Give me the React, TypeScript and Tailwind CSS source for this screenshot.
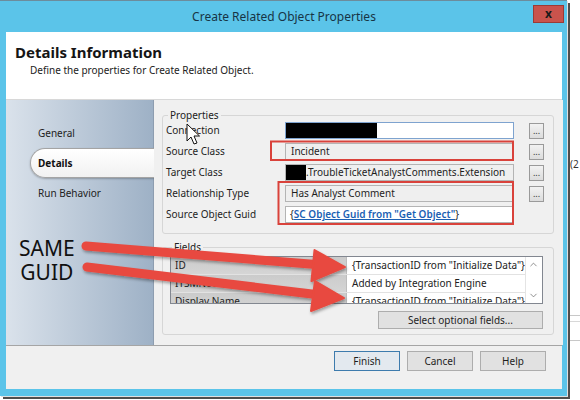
import React from "react";
import { ChevronUp, ChevronDown } from "lucide-react";

function Ellipsis() {
  return (
    <div className="ml-[15px] w-[15px] h-[16px] shrink-0 border border-[#9a9a9a] bg-gradient-to-b from-[#f2f2f2] to-[#dcdcdc] flex items-end justify-center text-[9px] leading-[10px] pb-[2px] text-[#333]">
      ...
    </div>
  );
}

function Row({ label, children, button = true }: { label: string; children: React.ReactNode; button?: boolean }) {
  return (
    <div className="flex items-center h-[17px]">
      <div className="w-[119px] shrink-0 text-[10px] text-[#1e1e1e] whitespace-nowrap">{label}</div>
      {children}
      {button ? <Ellipsis /> : <div className="ml-[15px] w-[15px] shrink-0" />}
    </div>
  );
}

function Box({ white = false, blue = false, children }: { white?: boolean; blue?: boolean; children?: React.ReactNode }) {
  return (
    <div
      className={
        "w-[229px] h-[17px] shrink-0 border flex items-center overflow-hidden whitespace-nowrap text-[10px] text-[#1e1e1e] " +
        (white ? "bg-white " : "bg-[#efefef] ") +
        (blue ? "border-[#7ea3cf]" : "border-[#b4b4b4]")
      }
    >
      {children}
    </div>
  );
}

function GridRow({ name, value }: { name: string; value: string }) {
  return (
    <div className="flex h-[18px] shrink-0 border-b border-[#e2e2e2]">
      <div className="w-[176px] shrink-0 bg-gradient-to-b from-[#cbcbcb] to-[#d5d5d5] border-r border-[#bdbdbd] pl-[4px] text-[10px] leading-[17px] text-[#222] whitespace-nowrap overflow-hidden">
        {name}
      </div>
      <div className="flex-1 bg-white pl-[5px] text-[10px] leading-[17px] text-[#222] whitespace-nowrap overflow-hidden">
        {value}
      </div>
    </div>
  );
}

function FooterButton({ label, primary = false }: { label: string; primary?: boolean }) {
  return (
    <div
      className={
        "w-[66px] h-[20px] border flex items-center justify-center text-[10px] text-[#1e1e1e] " +
        (primary ? "border-[#3d7bad] bg-[#e3e9ef]" : "border-[#adadad] bg-[#e1e1e1]")
      }
    >
      {label}
    </div>
  );
}

export default function App() {
  return (
    <div className="relative w-[580px] h-[400px] overflow-hidden bg-white flex font-['Noto_Sans','Open_Sans',sans-serif]">
      {/* dialog window */}
      <div className="w-[567px] h-[396px] shrink-0 bg-[#5bc4e9] border-t border-[#6c8c9c] flex flex-col pl-[6px] pr-[5px] pb-[7px] shadow-[1px_1px_0_#e0e0e0,3px_3px_0_#4e4e4e]">
        {/* title bar */}
        <div className="relative h-[31px] shrink-0 flex items-center justify-center text-[12px] text-[#173445]">
          Create Related Object Properties
          <div className="absolute right-[-2px] top-[4px] w-[31px] h-[18px] bg-[#c9534c] border border-[#9b3b36] flex items-center justify-center text-[12px] font-bold leading-none text-[#1a1a1a]">
            x
          </div>
        </div>

        <div className="flex-1 flex flex-col bg-white">
          {/* header */}
          <div className="h-[68px] shrink-0 pl-[9px] pt-[10px] border-b border-[#d8d8d8]">
            <div className="text-[15px] leading-[20px] font-bold text-[#151515]">Details Information</div>
            <div className="pl-[15px] mt-[1px] text-[10px] leading-[14px] text-[#222]">
              Define the properties for Create Related Object.
            </div>
          </div>

          {/* body */}
          <div className="flex flex-1">
            {/* navigation */}
            <div className="w-[148px] shrink-0 bg-gradient-to-r from-[#dae2eb] to-[#9eb1c6] border-r border-[#8d9db0] pt-[18px] flex flex-col">
              <div className="h-[30px] flex items-center pl-[32px] text-[10px] text-[#222]">General</div>
              <div className="h-[30px] ml-[24px] mr-[-1px] rounded-l-[15px] border border-r-0 border-[#a4a4a4] bg-gradient-to-b from-white to-[#f1f1f1] shadow-[0_1px_2px_rgba(0,0,0,0.25)] flex items-center pl-[7px] text-[10px] font-bold text-[#111]">
                Details
              </div>
              <div className="h-[30px] flex items-center pl-[32px] text-[10px] text-[#222]">Run Behavior</div>
            </div>

            {/* content */}
            <div className="flex-1 bg-[#f0f0f0] pl-[8px] pr-[9px] pt-[8px]">
              <fieldset className="border border-[#d6d6d6] rounded-[3px] pl-[3px] pr-[7px] pb-[10px]">
                <legend className="ml-[2px] px-[2px] text-[10px] leading-[14px] text-[#222]">Properties</legend>
                <div className="flex flex-col gap-[4px]">
                  <Row label="Connection">
                    <Box white blue>
                      <div className="w-[91px] h-full bg-black shrink-0" />
                    </Box>
                  </Row>
                  <Row label="Source Class">
                    <Box>
                      <span className="pl-[5px]">Incident</span>
                    </Box>
                  </Row>
                  <Row label="Target Class">
                    <Box>
                      <div className="w-[20px] h-full bg-black shrink-0" />
                      <span>.TroubleTicketAnalystComments.Extension</span>
                    </Box>
                  </Row>
                  <Row label="Relationship Type">
                    <Box>
                      <span className="pl-[5px]">Has Analyst Comment</span>
                    </Box>
                  </Row>
                  <Row label="Source Object Guid" button={false}>
                    <Box white>
                      <span className="pl-[4px]">{"{"}</span>
                      <span className="text-[#1b5fb3] font-semibold underline">SC Object Guid from "Get Object"</span>
                      <span>{"}"}</span>
                    </Box>
                  </Row>
                </div>
              </fieldset>

              <fieldset className="mt-[6px] border border-[#d6d6d6] rounded-[3px] pl-[7px] pr-[10px] pb-[5px]">
                <legend className="ml-[2px] px-[2px] text-[10px] leading-[14px] text-[#222]">Fields</legend>
                <div className="mt-[2px] h-[48px] border border-[#828790] flex overflow-hidden">
                  <div className="flex-1 flex flex-col">
                    <GridRow name="ID" value={'{TransactionID from "Initialize Data"}'} />
                    <GridRow name="ITSMNote" value="Added by Integration Engine" />
                    <GridRow name="Display Name" value={'{TransactionID from "Initialize Data"}'} />
                  </div>
                  <div className="w-[17px] shrink-0 bg-white border-l border-[#e4e4e4] flex flex-col justify-between items-center py-[2px]">
                    <ChevronUp size={11} strokeWidth={1.5} color="#606060" />
                    <ChevronDown size={11} strokeWidth={1.5} color="#606060" />
                  </div>
                </div>
                <div className="mt-[7px] flex justify-end">
                  <div className="w-[165px] h-[18px] border border-[#adadad] bg-[#e1e1e1] flex items-center justify-center text-[10px] text-[#1e1e1e]">
                    Select optional fields...
                  </div>
                </div>
              </fieldset>
            </div>
          </div>

          {/* footer */}
          <div className="h-[44px] shrink-0 border-t border-[#a5a5a5] bg-[#f0f0f0] flex justify-end gap-[7px] pt-[5px] pr-[16px]">
            <FooterButton label="Finish" primary />
            <FooterButton label="Cancel" />
            <FooterButton label="Help" />
          </div>
        </div>
      </div>

      {/* window behind, on the right */}
      <div className="flex-1 flex flex-col pl-[3px] pt-[158px]">
        <div className="text-[10px] leading-[12px] text-[#333]">(2</div>
        <div className="mt-[145px] h-px bg-[#c8c8c8]" />
        <div className="mt-[5px] h-px bg-[#d8d8d8]" />
        <div className="mt-[18px] h-px bg-[#c8c8c8]" />
      </div>

      {/* annotation text */}
      <div className="absolute left-[19px] top-[236px] text-[21px] leading-[24px] text-[#111] text-center">
        <div>SAME</div>
        <div>GUID</div>
      </div>

      {/* annotation arrows, highlights and mouse pointer */}
      <svg className="absolute inset-0 pointer-events-none" width="580" height="400" viewBox="0 0 580 400">
        <defs>
          <filter id="arrowShadow" x="-10%" y="-50%" width="120%" height="200%">
            <feDropShadow dx="1" dy="2" stdDeviation="1.5" floodColor="#000" floodOpacity="0.35" />
          </filter>
        </defs>
        <rect x="271" y="141.5" width="242" height="18.5" fill="none" stroke="#d9423b" strokeWidth="2" />
        <rect x="278.5" y="182" width="234.5" height="42" fill="none" stroke="#d9423b" strokeWidth="2" />
        <g filter="url(#arrowShadow)" fill="#e8493f" stroke="#e8493f">
          <line x1="86" y1="246" x2="316" y2="264.5" strokeWidth="9" strokeLinecap="round" />
          <polygon points="345,267 311.5,281 314.5,250" strokeWidth="2" strokeLinejoin="round" />
          <line x1="87" y1="267" x2="316" y2="294.5" strokeWidth="9" strokeLinecap="round" />
          <polygon points="344,298 311,311 315,281" strokeWidth="2" strokeLinejoin="round" />
        </g>
        <path
          d="M187 124 L187 141 L191 137 L194 144 L197 143 L194 136 L199.5 136 Z"
          fill="#ffffff"
          stroke="#111"
          strokeWidth="1"
          strokeLinejoin="round"
        />
      </svg>
    </div>
  );
}
